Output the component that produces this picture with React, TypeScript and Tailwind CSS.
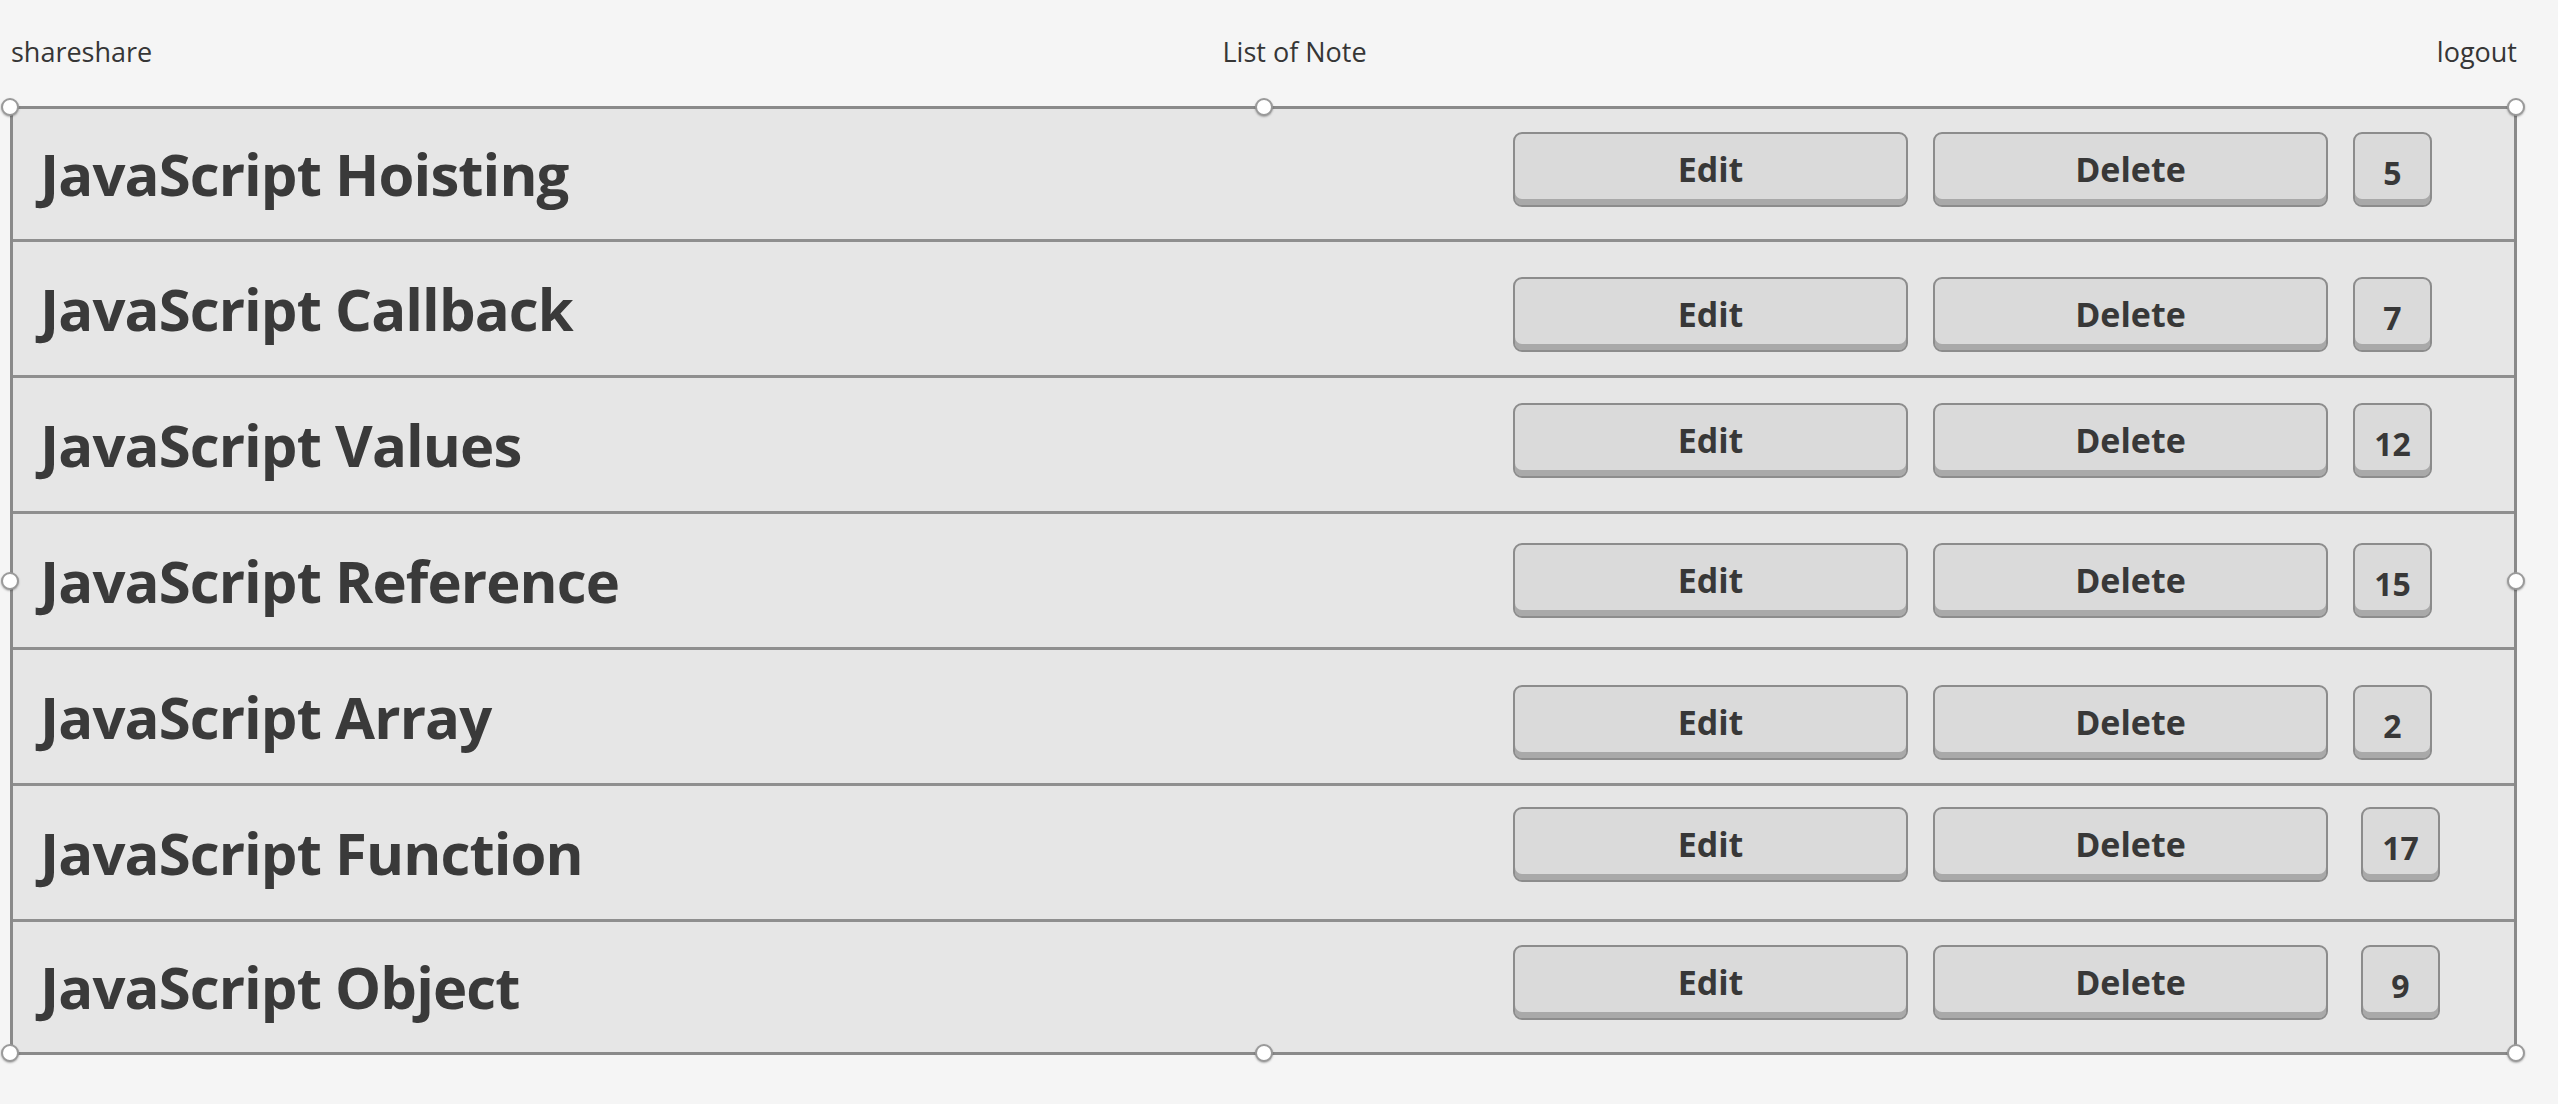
import React from 'react';

interface Note {
  id: number;
  title: string;
  count: number;
  rowClass: string;
  actionsClass: string;
  countClass: string;
}

const notes: Note[] = [
  { id: 1, title: 'JavaScript Hoisting', count: 5, rowClass: 'h-[130px]', actionsClass: 'mt-[23px]', countClass: 'ml-[25px] mr-[82px]' },
  { id: 2, title: 'JavaScript Callback', count: 7, rowClass: 'h-[136px] border-t-[3px]', actionsClass: 'mt-[35px]', countClass: 'ml-[25px] mr-[82px]' },
  { id: 3, title: 'JavaScript Values', count: 12, rowClass: 'h-[136px] border-t-[3px]', actionsClass: 'mt-[25px]', countClass: 'ml-[25px] mr-[82px]' },
  { id: 4, title: 'JavaScript Reference', count: 15, rowClass: 'h-[136px] border-t-[3px]', actionsClass: 'mt-[29px]', countClass: 'ml-[25px] mr-[82px]' },
  { id: 5, title: 'JavaScript Array', count: 2, rowClass: 'h-[136px] border-t-[3px]', actionsClass: 'mt-[35px]', countClass: 'ml-[25px] mr-[82px]' },
  { id: 6, title: 'JavaScript Function', count: 17, rowClass: 'h-[136px] border-t-[3px]', actionsClass: 'mt-[21px]', countClass: 'ml-[33px] mr-[74px]' },
  { id: 7, title: 'JavaScript Object', count: 9, rowClass: 'h-[133px] border-t-[3px]', actionsClass: 'mt-[23px]', countClass: 'ml-[33px] mr-[74px]' },
];

const font = { fontFamily: '"Open Sans", "Liberation Sans", sans-serif' };

function Handle({ className }: { className: string }) {
  return (
    <span
      className={`absolute w-[18px] h-[18px] rounded-full bg-white border-2 border-[#9a9a9a] shadow-[0_1px_2px_rgba(0,0,0,0.3)] -translate-x-1/2 -translate-y-1/2 ${className}`}
    />
  );
}

function WireButton({ label, className }: { label: string | number; className: string }) {
  return (
    <button
      className={`h-[75px] rounded-[9px] border-2 border-[#8c8c8c] bg-[#dadada] shadow-[inset_0_-6px_0_#a9a9a9] text-[#383838] font-bold flex items-center justify-center ${className}`}
    >
      {label}
    </button>
  );
}

export default function App() {
  return (
    <div className="min-h-[1104px] w-full bg-[#f5f5f5] text-[#3a3a3a]" style={font}>
      <div className="pl-[10px] pr-[41px]">
        <header className="h-[106px] flex justify-between items-start pt-[34px] text-[27px] leading-[36px] font-medium text-[#363636]">
          <span className="pl-px">shareshare</span>
          <span>List of Note</span>
          <span>logout</span>
        </header>

        <div className="relative border-[3px] border-[#8a8a8a] bg-[#e6e6e6]">
          {notes.map(note => (
            <div key={note.id} className={`flex border-[#8f8f8f] ${note.rowClass}`}>
              <div className="flex-1 flex items-center pl-[27px]">
                <h2 className="text-[58px] font-bold tracking-[-0.9px] leading-none text-[#3a3a3a]">
                  {note.title}
                </h2>
              </div>
              <div className={`flex self-start ${note.actionsClass}`}>
                <WireButton label="Edit" className="w-[395px] text-[34px]" />
                <WireButton label="Delete" className="w-[395px] ml-[25px] text-[34px]" />
                <WireButton label={note.count} className={`w-[79px] text-[32px] pt-[7px] ${note.countClass}`} />
              </div>
            </div>
          ))}

          <Handle className="left-[-3px] top-[-2px]" />
          <Handle className="left-1/2 top-[-2px]" />
          <Handle className="left-[calc(100%+2px)] top-[-2px]" />
          <Handle className="left-[-3px] top-1/2" />
          <Handle className="left-[calc(100%+2px)] top-1/2" />
          <Handle className="left-[-3px] top-[calc(100%+1px)]" />
          <Handle className="left-1/2 top-[calc(100%+1px)]" />
          <Handle className="left-[calc(100%+2px)] top-[calc(100%+1px)]" />
        </div>
      </div>
    </div>
  );
}
